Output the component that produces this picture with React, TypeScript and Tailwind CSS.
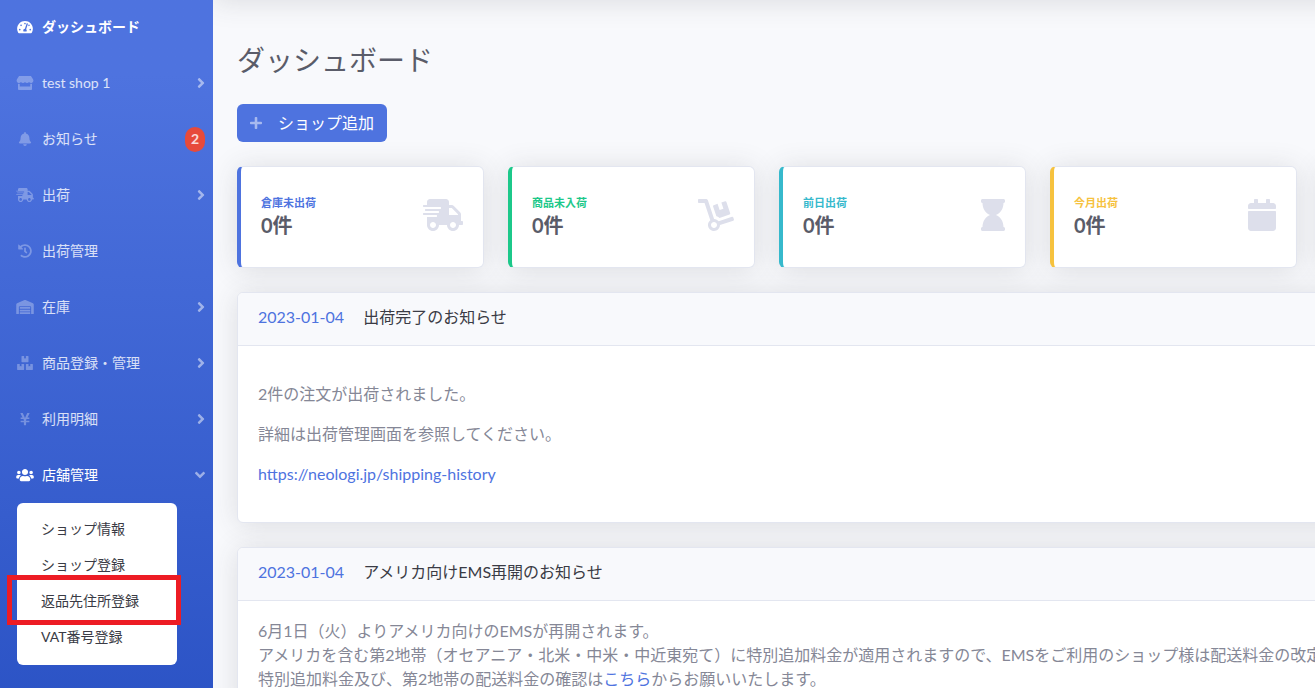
import React from 'react';
import type { IconType } from 'react-icons';
import {
  FaAngleDown,
  FaAngleRight,
  FaBell,
  FaBoxes,
  FaCalendar,
  FaDolly,
  FaHistory,
  FaHourglass,
  FaPlus,
  FaShippingFast,
  FaStore,
  FaTachometerAlt,
  FaUsers,
  FaWarehouse,
  FaYenSign,
} from 'react-icons/fa';

type NavItem = {
  label: string;
  icon: IconType;
  active?: boolean;
  bold?: boolean;
  arrow?: 'right' | 'down';
  badge?: number;
};

const navItems: NavItem[] = [
  { label: 'ダッシュボード', icon: FaTachometerAlt, active: true, bold: true },
  { label: 'test shop 1', icon: FaStore, arrow: 'right' },
  { label: 'お知らせ', icon: FaBell, badge: 2 },
  { label: '出荷', icon: FaShippingFast, arrow: 'right' },
  { label: '出荷管理', icon: FaHistory },
  { label: '在庫', icon: FaWarehouse, arrow: 'right' },
  { label: '商品登録・管理', icon: FaBoxes, arrow: 'right' },
  { label: '利用明細', icon: FaYenSign, arrow: 'right' },
  { label: '店舗管理', icon: FaUsers, active: true, arrow: 'down' },
];

const subItems = ['ショップ情報', 'ショップ登録', '返品先住所登録', 'VAT番号登録'];
const highlighted = '返品先住所登録';

const stats = [
  { label: '倉庫未出荷', icon: FaShippingFast, size: 'w-10', border: 'border-l-[#4e73df]', text: 'text-[#4e73df]' },
  { label: '商品未入荷', icon: FaDolly, size: 'w-9', border: 'border-l-[#1cc88a]', text: 'text-[#1cc88a]' },
  { label: '前日出荷', icon: FaHourglass, size: 'w-6', border: 'border-l-[#36b9cc]', text: 'text-[#36b9cc]' },
  { label: '今月出荷', icon: FaCalendar, size: 'w-7', border: 'border-l-[#f6c23e]', text: 'text-[#f6c23e]' },
];

const cardClass = 'rounded-md border border-[#e3e6f0] bg-white shadow-[0_2px_28px_rgba(58,59,69,0.15)]';

const NavLink = ({ item }: { item: NavItem }) => {
  const Icon = item.icon;
  return (
    <a
      href="#"
      className={`flex h-14 items-center pl-4 pr-2 text-sm ${item.active ? 'text-white' : 'text-white/80'} ${item.bold ? 'font-bold' : 'font-normal'}`}
    >
      <Icon className={`mr-2 h-3.5 w-[18px] ${item.active ? 'text-white' : 'text-white/30'}`} />
      <span className="flex-1">{item.label}</span>
      {item.arrow === 'right' && <FaAngleRight className="h-4 w-2 text-white/50" />}
      {item.arrow === 'down' && <FaAngleDown className="h-4 w-2.5 text-white/50" />}
      {item.badge && (
        <span className="flex h-[25px] w-5 items-center justify-center rounded-full bg-[#e74a3b] font-bold">
          {item.badge}
        </span>
      )}
    </a>
  );
};

const Sidebar = () => (
  <nav className="w-[213px] shrink-0 bg-linear-to-b from-[#4e73df] from-10% to-[#224abe] to-120%">
    <div className="-mt-px">
      {navItems.map((item) => (
        <NavLink key={item.label} item={item} />
      ))}
    </div>
    <ul className="ml-[17px] mr-9 rounded-md bg-white pt-2 pb-2.5">
      {subItems.map((label) => (
        <li key={label} className="relative">
          <a href="#" className="flex h-9 items-center px-6 text-sm text-[#3a3b45]">
            {label}
          </a>
          {label === highlighted && (
            <span className="pointer-events-none absolute -top-2 -right-1 -bottom-1.5 -left-2.5 border-5 border-[#ed1c24]" />
          )}
        </li>
      ))}
    </ul>
  </nav>
);

const NewsCard = ({ date, title, children }: { date: string; title: string; children: React.ReactNode }) => (
  <article className={`overflow-hidden ${cardClass}`}>
    <header className="flex gap-[19px] border-b border-[#e3e6f0] bg-[#f8f9fc] px-5 pt-3 pb-4">
      <span className="text-[#4e73df]">{date}</span>
      <h2 className="text-[#3a3b45]">{title}</h2>
    </header>
    {children}
  </article>
);

const App = () => {
  return (
    <div className="flex min-h-screen bg-[#f8f9fc] font-[Lato,'Noto_Sans_CJK_JP',sans-serif] text-base text-[#858796]">
      <Sidebar />
      <div className="min-w-0 flex-1 overflow-hidden">
        {/* top bar is scrolled away, only its shadow stays */}
        <div className="-mt-[70px] -mr-10 h-[70px] bg-white shadow-[0_2px_28px_rgba(58,59,69,0.15)]" />

        <main className="flex w-max flex-col gap-6 px-6 pt-10 pb-6">
          <h1 className="text-[28px] leading-10 text-[#5a5c69]">ダッシュボード</h1>

          <div>
            <button className="flex h-[38px] items-center rounded-md bg-[#4e73df] px-[13px] text-white">
              <FaPlus className="mr-4 h-3.5 w-3 text-white/50" />
              ショップ追加
            </button>
          </div>

          <div className="flex gap-6">
            {stats.map(({ label, icon: Icon, size, border, text }) => (
              <div key={label} className={`w-[247px] border-l-4 px-5 pt-6 pb-7 ${cardClass} ${border}`}>
                <div className="flex h-12 items-center justify-between">
                  <div className="pt-0.5 font-bold">
                    <div className={`mb-0.5 text-[11px] leading-4 ${text}`}>{label}</div>
                    <div className="text-xl leading-6 text-[#5a5c69]">0件</div>
                  </div>
                  <Icon className={`h-8 text-[#dddfeb] ${size}`} />
                </div>
              </div>
            ))}
            <div className={`w-[247px] ${cardClass}`} />
          </div>

          <NewsCard date="2023-01-04" title="出荷完了のお知らせ">
            <div className="flex flex-col gap-4 px-5 py-9">
              <p>2件の注文が出荷されました。</p>
              <p>詳細は出荷管理画面を参照してください。</p>
              <p>
                <a href="#" className="text-[#4e73df]">https://neologi.jp/shipping-history</a>
              </p>
            </div>
          </NewsCard>

          <NewsCard date="2023-01-04" title="アメリカ向けEMS再開のお知らせ">
            <div className="px-5 pt-[18px] pb-5 whitespace-nowrap">
              <p>6月1日（火）よりアメリカ向けのEMSが再開されます。</p>
              <p>アメリカを含む第2地帯（オセアニア・北米・中米・中近東宛て）に特別追加料金が適用されますので、EMSをご利用のショップ様は配送料金の改定</p>
              <p>
                特別追加料金及び、第2地帯の配送料金の確認は
                <a href="#" className="text-[#4e73df]">こちら</a>
                からお願いいたします。
              </p>
            </div>
          </NewsCard>
        </main>
      </div>
    </div>
  );
};

export default App;
